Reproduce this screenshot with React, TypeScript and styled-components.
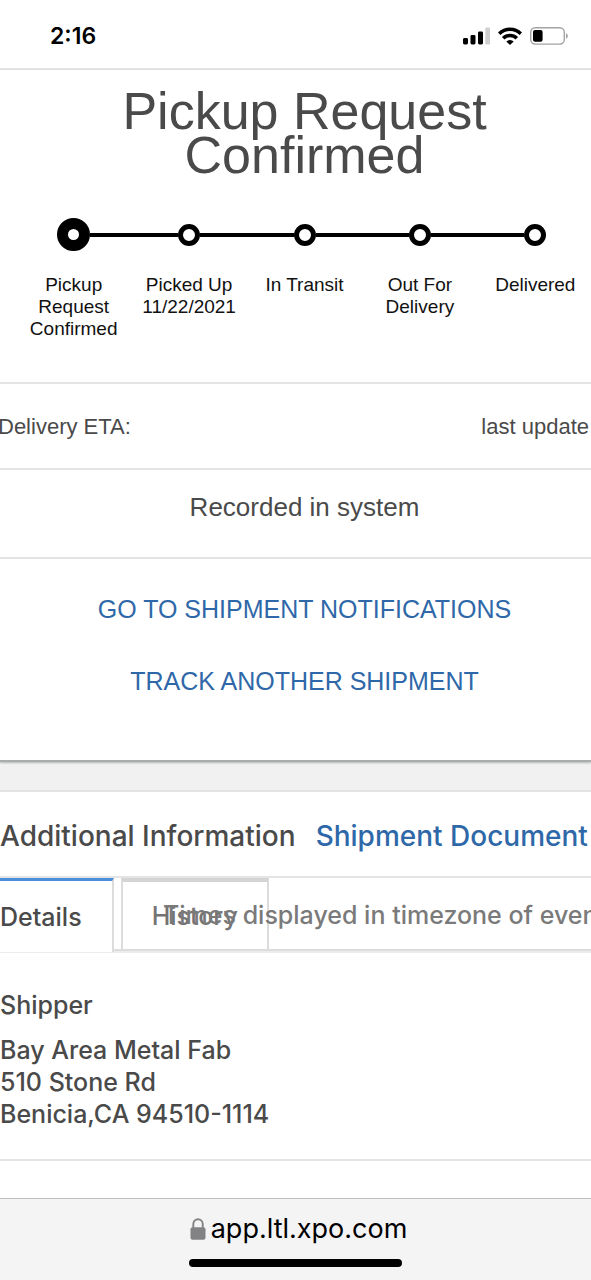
import React from "react";
import styled, { createGlobalStyle } from "styled-components";

const sans = '"Liberation Sans", Arial, sans-serif';
const ui = 'Inter, "Liberation Sans", sans-serif';
const ink = "#4a4a4a";
const blue = "#2f68a8";
const rule = "#e4e4e4";

const GlobalStyle = createGlobalStyle`
  *, *::before, *::after { box-sizing: border-box; }
  body { margin: 0; background: #fff; }
  h1, h2, h3, p, ol, address { margin: 0; padding: 0; }
  a { color: ${blue}; text-decoration: none; }
`;

const Page = styled.div`
  display: flex;
  flex-direction: column;
  min-height: 100vh;
  overflow-x: hidden;
  color: ${ink};
  font-family: ${sans};
  background: #fff;
`;

const StatusBar = styled.header`
  display: flex;
  align-items: center;
  justify-content: space-between;
  height: 70px;
  padding: 4px 23px 0 50px;
  border-bottom: 2px solid ${rule};
`;

const Clock = styled.time`
  color: #000;
  font: 600 23px/28px ${ui};
`;

const StatusIcons = styled.div`
  display: flex;
  align-items: center;
  gap: 8px;
`;

const SummaryCard = styled.section`
  position: relative;
  border-bottom: 2px solid #a9adad;
  box-shadow: 0 1px 2px rgba(0, 0, 0, 0.25);
`;

const Title = styled.h1`
  padding: 19px 100px 0 118px;
  font-weight: 400;
  font-size: 52px;
  line-height: 44px;
  text-align: center;
`;

const Steps = styled.ol`
  display: grid;
  grid-template-columns: repeat(5, 1fr);
  margin: 41px -2px 0 16px;
  padding-bottom: 42px;
  list-style: none;
`;

const Step = styled.li`
  display: flex;
  flex-direction: column;
  gap: 23px;
  color: #111;
  font-size: 19px;
  line-height: 22px;
  text-align: center;
`;

const Track = styled.div`
  display: flex;
  align-items: center;
  height: 33px;
`;

const Segment = styled.span<{ $hidden?: boolean }>`
  flex: 1;
  height: 4px;
  background: ${(p) => (p.$hidden ? "transparent" : "#000")};
`;

const Marker = styled.span<{ $current?: boolean }>`
  width: ${(p) => (p.$current ? 33 : 22)}px;
  height: ${(p) => (p.$current ? 33 : 22)}px;
  border: ${(p) => (p.$current ? 11 : 5)}px solid #000;
  border-radius: 50%;
`;

const StepLabel = styled.span`
  height: 66px;
  padding: 0 8px;
`;

const EtaRow = styled.div`
  display: flex;
  align-items: center;
  justify-content: space-between;
  height: 86px;
  margin-left: -2px;
  padding: 2px 2px 0 0;
  border-top: 2px solid ${rule};
  font-size: 22px;
  white-space: nowrap;
`;

const Recorded = styled.p`
  height: 89px;
  padding: 21px 0 0 18px;
  border-top: 2px solid ${rule};
  font-size: 26px;
  line-height: 32px;
  text-align: center;
`;

const Actions = styled.nav`
  display: flex;
  flex-direction: column;
  align-items: center;
  gap: 40px;
  padding: 34px 0 63px 18px;
  border-top: 2px solid ${rule};
  font-size: 25px;
  line-height: 32px;
`;

const Gutter = styled.div`
  height: 28px;
  background: #f1f1f1;
`;

const InfoHeader = styled.div`
  display: flex;
  align-items: center;
  gap: 20px;
  height: 88px;
  padding-top: 3px;
  border-top: 2px solid ${rule};
  border-bottom: 2px solid ${rule};
  font: 500 28px/36px ${ui};
  white-space: nowrap;
`;

const InfoTitle = styled.h2`
  font: inherit;
`;

const TabBar = styled.div`
  position: relative;
  display: flex;
  height: 75px;
  border-bottom: 2px solid #ececec;
`;

const Tab = styled.button<{ $active?: boolean }>`
  height: ${(p) => (p.$active ? 74 : 73)}px;
  padding: ${(p) => (p.$active ? "0 30px 0 0" : "0 29px")};
  color: ${(p) => (p.$active ? ink : "#747474")};
  background: #fff;
  border: solid #dcdcdc;
  border-width: ${(p) => (p.$active ? "3px 2px 0 0" : "4px 2px 2px 2px")};
  border-top-color: ${(p) => (p.$active ? "#4a8ddb" : "#d4d4d4")};
  font: 500 25px/32px ${ui};
`;

const TabFill = styled.span`
  flex: 0 0 7px;
  height: 73px;
  border-bottom: 2px solid #dcdcdc;

  &:last-of-type {
    flex: 1;
  }
`;

const TimezoneNote = styled.p`
  position: absolute;
  top: 21px;
  left: 163px;
  color: #7a7a7a;
  font: 500 25px/32px ${ui};
  white-space: nowrap;
`;

const Party = styled.section`
  padding: 36px 0 29px;
  border-bottom: 2px solid ${rule};
  font: 500 25px/32px ${ui};
`;

const PartyTitle = styled.h3`
  margin-bottom: 13px;
  font: inherit;
`;

const PartyAddress = styled.address`
  font-style: normal;
`;

const BrowserBar = styled.footer`
  display: flex;
  flex-direction: column;
  align-items: center;
  height: 82px;
  margin-top: auto;
  padding-top: 14px;
  background: #f4f4f4;
  border-top: 1px solid #bdbdbd;
`;

const Address = styled.div`
  display: flex;
  align-items: center;
  gap: 5px;
  padding-left: 6px;
  color: #000;
  font: 400 27px/32px ${ui};
`;

const HomeBar = styled.div`
  width: 36%;
  height: 8px;
  margin-top: 14px;
  background: #000;
  border-radius: 4px;
`;

const steps = [
  { label: "Pickup Request Confirmed" },
  { label: "Picked Up", date: "11/22/2021" },
  { label: "In Transit" },
  { label: "Out For Delivery" },
  { label: "Delivered" },
];

const SignalIcon = () => (
  <svg width="27" height="18" viewBox="0 0 27 18" aria-hidden="true">
    <rect x="0" y="11" width="5" height="6.5" rx="1.4" />
    <rect x="7.5" y="8" width="5" height="9.5" rx="1.4" />
    <rect x="15" y="4.5" width="5" height="13" rx="1.4" />
    <rect x="22.3" y="0.5" width="4.7" height="17" rx="1.2" fill="#cfcfcf" />
  </svg>
);

const WifiIcon = () => (
  <svg width="24" height="18" viewBox="0 0 24 18" fill="none" stroke="#000" strokeWidth="3.5" aria-hidden="true">
    <path d="M1.2 6.7a15.4 15.4 0 0 1 21.6 0" />
    <path d="M5.2 11.2a9.8 9.8 0 0 1 13.6 0" />
    <path d="M8.3 14.4a5.3 5.3 0 0 1 7.4 0L12 18z" fill="#000" stroke="none" />
  </svg>
);

const BatteryIcon = () => (
  <svg width="38" height="18" viewBox="0 0 38 18" aria-hidden="true">
    <rect x="0.7" y="0.7" width="33.6" height="16.4" rx="4.5" fill="none" stroke="#a3a3a3" strokeWidth="1.4" />
    <rect x="3" y="3" width="9.6" height="11.8" rx="2" />
    <path d="M36 6.2c2.4.8 2.4 4.8 0 5.6z" fill="#a3a3a3" />
  </svg>
);

const LockIcon = () => (
  <svg width="16" height="22" viewBox="0 0 16 22" aria-hidden="true">
    <path d="M3.3 10V6a4.7 4.7 0 0 1 9.4 0v4" fill="none" stroke="#828284" strokeWidth="1.9" />
    <rect x="0.5" y="9.3" width="15" height="12.4" rx="2" fill="#828284" />
  </svg>
);

export default function App() {
  return (
    <Page>
      <GlobalStyle />
      <StatusBar>
        <Clock>2:16</Clock>
        <StatusIcons>
          <SignalIcon />
          <WifiIcon />
          <BatteryIcon />
        </StatusIcons>
      </StatusBar>

      <main>
        <SummaryCard>
          <Title>Pickup Request Confirmed</Title>
          <Steps>
            {steps.map((step, i) => (
              <Step key={step.label} aria-current={i === 0 ? "step" : undefined}>
                <Track>
                  <Segment $hidden={i === 0} />
                  <Marker $current={i === 0} />
                  <Segment $hidden={i === steps.length - 1} />
                </Track>
                <StepLabel>
                  {step.label}
                  {step.date && <br />}
                  {step.date}
                </StepLabel>
              </Step>
            ))}
          </Steps>
          <EtaRow>
            <span>Delivery ETA:</span>
            <span>last update</span>
          </EtaRow>
          <Recorded>Recorded in system</Recorded>
          <Actions>
            <a href="#notifications">GO TO SHIPMENT NOTIFICATIONS</a>
            <a href="#track">TRACK ANOTHER SHIPMENT</a>
          </Actions>
        </SummaryCard>

        <Gutter />

        <InfoHeader>
          <InfoTitle>Additional Information</InfoTitle>
          <a href="#documents">Shipment Document</a>
        </InfoHeader>
        <TabBar>
          <Tab type="button" $active>
            Details
          </Tab>
          <TabFill />
          <Tab type="button">History</Tab>
          <TabFill />
          <TimezoneNote>Times displayed in timezone of even</TimezoneNote>
        </TabBar>
        <Party>
          <PartyTitle>Shipper</PartyTitle>
          <PartyAddress>
            Bay Area Metal Fab
            <br />
            510 Stone Rd
            <br />
            Benicia,CA 94510-1114
          </PartyAddress>
        </Party>
      </main>

      <BrowserBar>
        <Address>
          <LockIcon />
          <span>app.ltl.xpo.com</span>
        </Address>
        <HomeBar />
      </BrowserBar>
    </Page>
  );
}
